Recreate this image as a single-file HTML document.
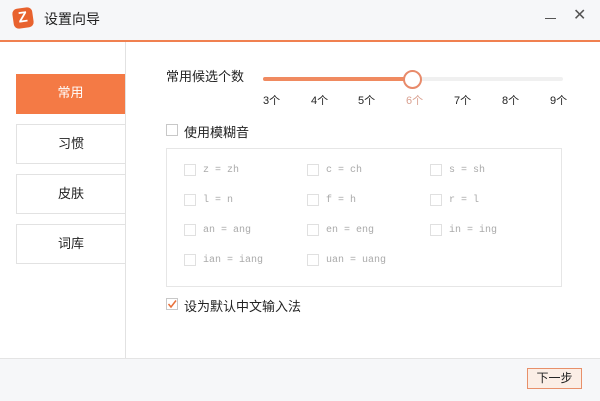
<!DOCTYPE html><html><head><style>
body{margin:0;width:600px;height:400px;background:#fff;font-family:"Liberation Sans","Noto Sans CJK SC",sans-serif;position:relative;overflow:hidden;font-size:13px;color:#222}
.a{position:absolute}
.tb{left:0;top:0;width:600px;height:40px;background:#f6f7f9;border-bottom:2px solid #f08050}
.nav{left:16px;width:109px;height:40px;border:1px solid #e2e2e2;border-right:none;box-sizing:border-box;text-align:center;line-height:38px;font-size:13px}
.cb{width:12px;height:12px;border:1px solid #c8c8c8;box-sizing:border-box;background:#fff}
.g{color:#aaa;font-family:"Liberation Mono",monospace;font-size:10px}
.gc{border-color:#e0e0e0}
.tk{top:92px;font-size:11px}
</style></head><body>
<div class="a tb"></div>
<div class="a" style="left:13px;top:8px;width:20px;height:20px;background:#e8622e;border-radius:5px;transform:rotate(-8deg);color:#fff;font-weight:bold;font-size:15px;text-align:center;line-height:20px">Z</div>
<div class="a" style="left:44px;top:9px;font-size:14px">设置向导</div>
<div class="a" style="left:545px;top:18px;width:11px;height:1px;background:#555"></div>
<div class="a" style="left:573px;top:5px;font-size:16px;color:#555">✕</div>
<div class="a" style="left:125px;top:42px;width:1px;height:316px;background:#e2e2e2"></div>
<div class="a nav" style="top:74px;background:#f47a45;color:#fff;border:none">常用</div>
<div class="a nav" style="top:124px">习惯</div>
<div class="a nav" style="top:174px">皮肤</div>
<div class="a nav" style="top:224px">词库</div>
<div class="a" style="left:166px;top:66px">常用候选个数</div>
<div class="a" style="left:263px;top:77px;width:300px;height:4px;background:#f0f0f0;border-radius:2px"></div>
<div class="a" style="left:263px;top:77px;width:150px;height:4px;background:#f08a60;border-radius:2px"></div>
<div class="a" style="left:403px;top:70px;width:15px;height:15px;border:2px solid #e88a6a;border-radius:50%;background:#fff"></div>
<div class="a tk" style="left:263px">3个</div><div class="a tk" style="left:311px">4个</div><div class="a tk" style="left:358px">5个</div><div class="a tk" style="left:406px;color:#d9a090">6个</div><div class="a tk" style="left:454px">7个</div><div class="a tk" style="left:502px">8个</div><div class="a tk" style="left:550px">9个</div>
<div class="a cb" style="left:166px;top:124px"></div>
<div class="a" style="left:184px;top:122px">使用模糊音</div>
<div class="a" style="left:166px;top:148px;width:396px;height:139px;border:1px solid #e6e6e6;box-sizing:border-box"></div>
<div class="a cb gc" style="left:184px;top:164px"></div><div class="a g" style="left:203px;top:165px">z = zh</div>
<div class="a cb gc" style="left:307px;top:164px"></div><div class="a g" style="left:326px;top:165px">c = ch</div>
<div class="a cb gc" style="left:430px;top:164px"></div><div class="a g" style="left:449px;top:165px">s = sh</div>
<div class="a cb gc" style="left:184px;top:194px"></div><div class="a g" style="left:203px;top:195px">l = n</div>
<div class="a cb gc" style="left:307px;top:194px"></div><div class="a g" style="left:326px;top:195px">f = h</div>
<div class="a cb gc" style="left:430px;top:194px"></div><div class="a g" style="left:449px;top:195px">r = l</div>
<div class="a cb gc" style="left:184px;top:224px"></div><div class="a g" style="left:203px;top:225px">an = ang</div>
<div class="a cb gc" style="left:307px;top:224px"></div><div class="a g" style="left:326px;top:225px">en = eng</div>
<div class="a cb gc" style="left:430px;top:224px"></div><div class="a g" style="left:449px;top:225px">in = ing</div>
<div class="a cb gc" style="left:184px;top:254px"></div><div class="a g" style="left:203px;top:255px">ian = iang</div>
<div class="a cb gc" style="left:307px;top:254px"></div><div class="a g" style="left:326px;top:255px">uan = uang</div>
<div class="a cb" style="left:166px;top:298px"></div>
<svg class="a" style="left:166px;top:298px" width="12" height="12"><path d="M2.5 6 L5 9 L10 2.5" stroke="#e8703a" stroke-width="1.5" fill="none"/></svg>
<div class="a" style="left:184px;top:296px">设为默认中文输入法</div>
<div class="a" style="left:0;top:358px;width:600px;height:42px;background:#f6f7f9;border-top:1px solid #e4e4e4"></div>
<div class="a" style="left:527px;top:368px;width:55px;height:21px;border:1px solid #e8906a;box-sizing:border-box;background:#fbeee6;text-align:center;line-height:19px;font-size:12px">下一步</div>
</body></html>
